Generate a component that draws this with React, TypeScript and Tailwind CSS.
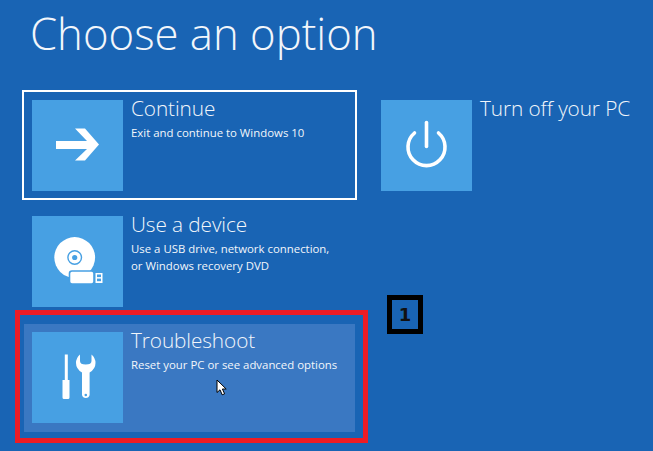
import React from "react";

const Tile = ({ children }: { children: React.ReactNode }) => (
  <div className="w-[91px] h-[91px] shrink-0 bg-[#47a0e3]">
    <svg width="91" height="91" viewBox="0 0 91 91" fill="none">
      {children}
    </svg>
  </div>
);

const ArrowIcon = () => (
  <Tile>
    <path d="M24 41H55L43 28.5H53L67 44.5L53 60.5H43L55 49H24Z" fill="#fff" />
  </Tile>
);

const PowerIcon = () => (
  <Tile>
    <path d="M33.5 33A18.5 18.5 0 1 0 57.5 33" stroke="#fff" strokeWidth="3.6" strokeLinecap="round" />
    <path d="M45.5 22.5V46.5" stroke="#fff" strokeWidth="3.6" strokeLinecap="round" />
  </Tile>
);

const DeviceIcon = () => (
  <Tile>
    <circle cx="42.7" cy="41.5" r="20.4" fill="#fff" />
    <circle cx="42.7" cy="41.5" r="6.8" stroke="#47a0e3" strokeWidth="1.4" />
    <circle cx="42.7" cy="41.5" r="2.6" fill="#47a0e3" />
    <rect x="37.5" y="55" width="24.5" height="13" rx="2.5" fill="#fff" stroke="#47a0e3" strokeWidth="1.6" />
    <rect x="63.5" y="57" width="7" height="10" fill="#fff" />
    <rect x="65" y="58.5" width="4" height="2.6" fill="#47a0e3" />
    <rect x="65" y="62.6" width="4" height="2.6" fill="#47a0e3" />
  </Tile>
);

const ToolsIcon = () => (
  <Tile>
    <path d="M32.8 22.5H35.8V48H37.5V65.5A1.5 1.5 0 0 1 36 67H32A1.5 1.5 0 0 1 30.5 65.5V48H32.8Z" fill="#fff" />
    <path
      d="M48 22.5V29Q48 32.5 53.7 32.5Q59.5 32.5 59.5 29V22.5Q63.5 26 63.5 31Q63.5 37 57.6 40.5V63A3.9 3.9 0 0 1 50 63V40.5Q44 37 44 31Q44 26 48 22.5Z"
      fill="#fff"
    />
    <circle cx="53.8" cy="63" r="1.3" fill="#47a0e3" />
  </Tile>
);

const Option = ({
  className,
  icon,
  title,
  lines,
}: {
  className: string;
  icon: React.ReactNode;
  title: string;
  lines?: string[];
}) => (
  <div className={`flex gap-2 border-2 pl-2 pt-2 ${className}`}>
    {icon}
    <div className="text-[#f2f6fb]">
      <div className="-mt-[8px] text-[20.8px] leading-[32px] font-light tracking-[-0.1px]">{title}</div>
      {lines?.map((l) => (
        <div key={l} className="text-[11.4px] leading-[17px]">
          {l}
        </div>
      ))}
    </div>
  </div>
);

export default function App() {
  return (
    <div
      className="relative h-[451px] w-[653px] overflow-hidden bg-[#1964b4] pl-[22px]"
      style={{ fontFamily: '"Open Sans", sans-serif' }}
    >
      <h1 className="pl-[8px] pt-[3px] h-[90px] text-[43.7px] leading-[60px] font-light text-[#f2f6fb]">
        Choose an option
      </h1>

      <div className="flex gap-[14px]">
        <div className="flex w-[335px] flex-col gap-[6px]">
          <Option
            className="h-[110px] border-white"
            icon={<ArrowIcon />}
            title="Continue"
            lines={["Exit and continue to Windows 10"]}
          />
          <Option
            className="h-[110px] border-transparent"
            icon={<DeviceIcon />}
            title="Use a device"
            lines={["Use a USB drive, network connection,", "or Windows recovery DVD"]}
          />
          <Option
            className="h-[112px] border-transparent bg-[#3a78c2] bg-clip-padding"
            icon={<ToolsIcon />}
            title="Troubleshoot"
            lines={["Reset your PC or see advanced options"]}
          />
        </div>
        <div className="w-[282px]">
          <Option className="h-[110px] border-transparent" icon={<PowerIcon />} title="Turn off your PC" />
        </div>
      </div>

      {/* annotation overlays */}
      <div
        className="absolute left-[15px] top-[310px] h-[133px] w-[353px] border-[5px] border-[#ed1c24]"
      />
      <div
        className="absolute left-[387px] top-[295px] flex h-[39px] w-[36px] items-center justify-center border-[5px] border-black text-[18px] font-bold text-[#111]"
        style={{ fontFamily: '"DejaVu Sans", sans-serif' }}
      >
        1
      </div>
      <svg className="absolute left-[216px] top-[379px]" width="12" height="17" viewBox="0 0 12 17">
        <path d="M1 1V13.5L4 10.8L6.2 15.8L8.6 14.8L6.4 10H10.2Z" fill="#fff" stroke="#000" strokeWidth="1" />
      </svg>
    </div>
  );
}
